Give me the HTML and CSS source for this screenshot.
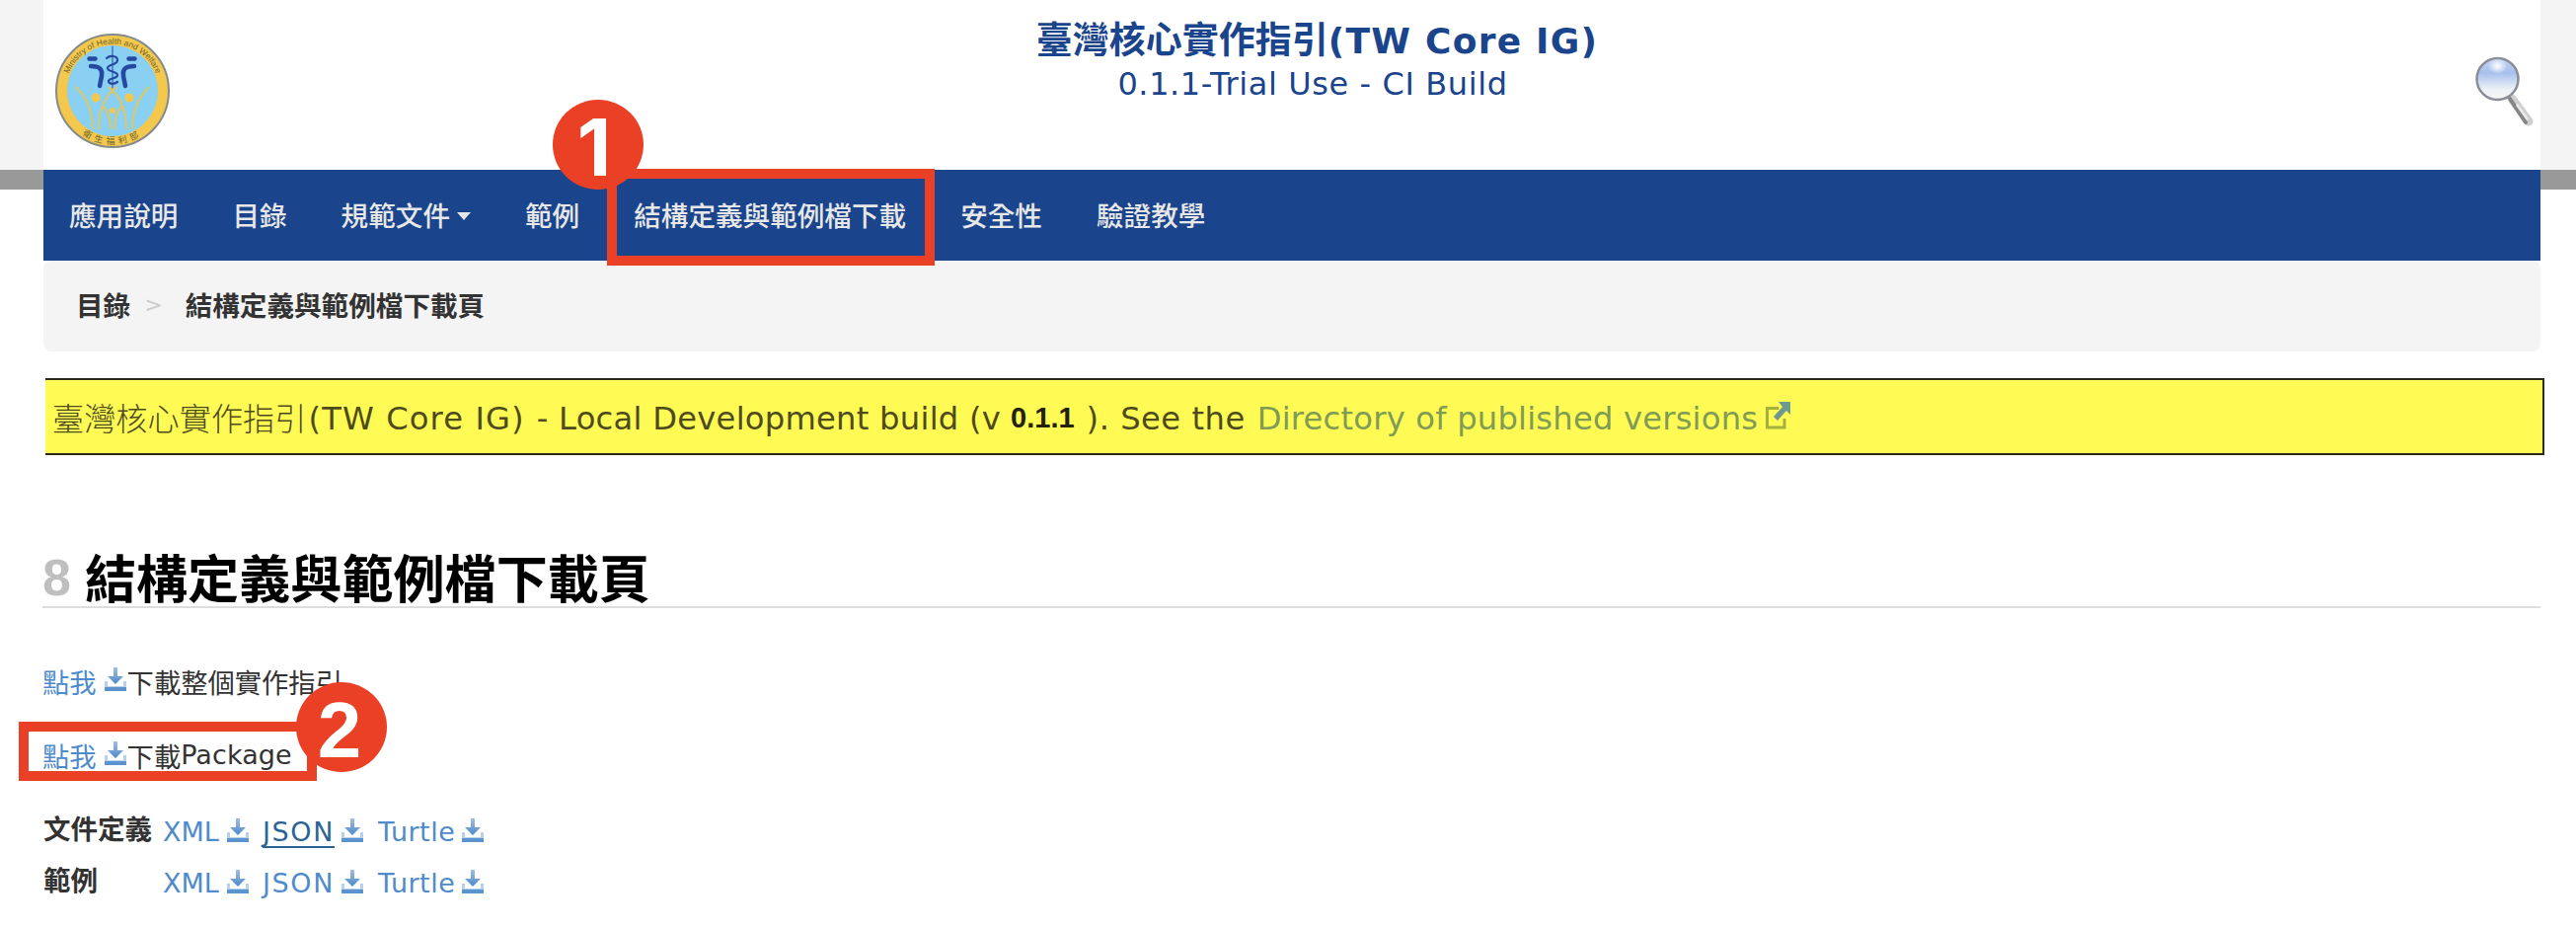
FILE: index.html
```html
<!DOCTYPE html>
<html lang="zh-Hant">
<head>
<meta charset="utf-8">
<title>結構定義與範例檔下載頁</title>
<link rel="stylesheet" href="styles.css">
</head>
<body>
<svg class="defs" width="0" height="0">
  <defs>
    <linearGradient id="dl" x1="0" y1="0" x2="0" y2="1"><stop offset="0" stop-color="#9fbfe2"/><stop offset="1" stop-color="#4d89c8"/></linearGradient>
    <symbol id="download" viewBox="0 0 22 24">
      <path d="M0 14h3v5h16v-5h3V24H0z" fill="#b9d0ea"/>
      <path d="M0 20h22v4H0z" fill="#5b93cf"/>
      <path d="M9 0h4v9h6l-8 8-8-8h6z" fill="url(#dl)"/>
    </symbol>
  </defs>
</svg>
<header class="masthead">
  <div class="masthead-inner">
    <svg class="logo" viewBox="0 0 116 116">
      <defs>
        <path id="arcTop" d="M10.500 58A47.500 47.500 0 0 1 105.500 58"/>
        <path id="arcBottom" d="M4 58A54 54 0 0 0 112 58"/>
      </defs>
      <circle cx="58" cy="58" r="57" fill="#f4c84c" stroke="#858b8c" stroke-width="2"/>
      <circle cx="58" cy="58" r="46" fill="#8ad0f3"/>
      <text class="logo-en"><textPath href="#arcTop" startOffset="50%" text-anchor="middle">Ministry of Health and Welfare</textPath></text>
      <text class="logo-zh"><textPath href="#arcBottom" startOffset="50%" text-anchor="middle">衛生福利部</textPath></text>
      <g fill="none" stroke="#2549a0" stroke-linecap="round">
        <path d="M58 13v42" stroke-width="1"/>
        <path d="M52 25c3-3 11-3 11 2s-10 4-10 8 10 3 10 7-9 3-9 6 5 4 9 1" stroke-width="2.200"/>
        <path d="M36 33c9 0 12 3 11 10l-2 10M80 33c-9 0-12 3-11 10l2 10" stroke-width="4.500"/>
        <path d="M34.500 25.500h6M74.500 25.500h6" stroke-width="4.500"/>
      </g>
      <g fill="none" stroke="#e5c657" stroke-width="1.800">
        <path d="M21 54q17 17 17 43M95 54q-17 17-17 43M62 54Q44 68 44 97M54 54q18 14 18 43M48 73q8 8 8 24M68 73q-8 8-8 24"/>
      </g>
      <g fill="#f4c84c"><circle cx="41" cy="65" r="4.500"/><circle cx="75" cy="65" r="4.500"/><circle cx="58" cy="78" r="3"/></g>
    </svg>
    <div class="titles">
      <div class="title"><span class="title-zh">臺灣核心實作指引</span><span class="title-en">(TW Core IG)</span></div>
      <div class="subtitle">0.1.1-Trial Use - CI Build</div>
    </div>
    <svg class="search" viewBox="0 0 62 72">
      <defs>
        <linearGradient id="lens" x1="0" y1="0" x2="0" y2="1"><stop offset="0" stop-color="#c3d3f3"/><stop offset=".35" stop-color="#a6c0ed"/><stop offset=".75" stop-color="#edf1f6"/><stop offset="1" stop-color="#f6f7f4"/></linearGradient>
        <radialGradient id="glare"><stop offset="0" stop-color="#fff"/><stop offset="1" stop-color="#fff" stop-opacity="0"/></radialGradient>
      </defs>
      <path d="M38 43L55 66" stroke="#cfcfcf" stroke-width="9" stroke-linecap="round"/>
      <path d="M36 43L52 67" stroke="#858585" stroke-width="4" stroke-linecap="round"/>
      <path d="M43 49L54 64" stroke="#ececec" stroke-width="2.500"/>
      <circle cx="23.500" cy="23" r="21" fill="url(#lens)" stroke="#8b8e96" stroke-width="2.500"/>
      <ellipse cx="23.500" cy="10" rx="10" ry="8" fill="url(#glare)"/>
    </svg>
  </div>
</header>
<div class="nav-strip">
  <nav class="nav">
    <a>應用說明</a><a>目錄</a><a>規範文件<i class="caret"></i></a><a>範例</a><a>結構定義與範例檔下載</a><a>安全性</a><a>驗證教學</a>
  </nav>
</div>
<main class="page">
  <div class="crumbs"><span>目錄</span><span class="sep">&gt;</span><span>結構定義與範例檔下載頁</span></div>
  <div class="notice">
    <span class="n-zh">臺灣核心實作指引</span><span class="n-name">(TW Core IG)</span><span class="n-a">- Local Development build (v</span><b class="n-v">0.1.1</b><span class="n-b">). See the</span><a class="n-link">Directory of published versions</a>
    <svg class="external" viewBox="0 0 26 28"><path d="M14 6.500H2.500V26H20v-9" fill="none" stroke="#a3b03c" stroke-width="3"/><path d="M14 0h12v13l-4-4-9 10-4-4 9-10z" fill="#6c9a8c"/></svg>
  </div>
  <h1 class="heading"><span class="num">8</span><span>結構定義與範例檔下載頁</span></h1>
  <p class="line"><a>點我</a><svg class="dl"><use href="#download"/></svg><span>下載整個實作指引</span></p>
  <p class="line"><a>點我</a><svg class="dl"><use href="#download"/></svg><span>下載</span><span class="pkg">Package</span></p>
  <div class="formats">
    <b>文件定義</b><a class="xml">XML</a><svg class="dl"><use href="#download"/></svg><a class="json hover">JSON</a><svg class="dl"><use href="#download"/></svg><a class="turtle">Turtle</a><svg class="dl"><use href="#download"/></svg>
    <b>範例</b><a class="xml">XML</a><svg class="dl"><use href="#download"/></svg><a class="json">JSON</a><svg class="dl"><use href="#download"/></svg><a class="turtle">Turtle</a><svg class="dl"><use href="#download"/></svg>
  </div>
</main>
<div class="frame frame-1"></div>
<div class="frame frame-2"></div>
<div class="badge badge-1"><span>1</span></div>
<div class="badge badge-2"><span>2</span></div>
</body>
</html>
```

FILE: styles.css
```css
* { box-sizing: border-box; }
body {
  margin: 0;
  position: relative;
  height: 942px;
  overflow: hidden;
  background: #fff;
  color: #333;
  font-family: "DejaVu Sans", "Noto Sans CJK TC", sans-serif;
  font-size: 27.5px;
  white-space: nowrap;
}
.defs { position: absolute; }
.masthead { background: #f4f4f4; padding: 0 36px 0 44px; }
.masthead-inner {
  height: 172px;
  background: #fff;
  display: flex;
  justify-content: space-between;
  padding: 0 5px 0 12px;
}
.logo { width: 116px; height: 116px; margin-top: 34px; }
.logo-en { font: 8.500px "Liberation Sans", sans-serif; fill: #6d6332; }
.logo-zh { font: 9px "Noto Sans CJK TC", sans-serif; fill: #6d6332; letter-spacing: 4px; }
.titles { color: #1a448c; text-align: center; margin-right: 10px; padding-top: 13px; }
.title { font-weight: bold; height: 50px; line-height: 50px; font-size: 36px; }
.title-zh { font-family: "Noto Sans CJK TC", sans-serif; font-size: 37px; }
.title-en { letter-spacing: 1.25px; }
.subtitle { font-size: 32px; height: 40px; line-height: 40px; letter-spacing: .6px; margin: 2px 9px 0 0; }
.search { width: 62px; height: 72px; margin-top: 57px; fill: none; }

.nav-strip {
  padding: 0 36px 0 44px;
  background: linear-gradient(#999, #999) no-repeat 0 0 / 100% 20px;
}
.nav {
  height: 92px;
  background: #1a448c;
  color: #e7e7e7;
  display: flex;
  align-items: center;
  padding: 0 0 3px 26px;
  gap: 55px;
  font: 500 27.6px "Noto Sans CJK TC", sans-serif;
}
.nav a { display: flex; align-items: center; color: inherit; }
.caret { margin: 5px 0 0 7px; border: 7.5px solid transparent; border-top: 8px solid #e7e7e7; border-bottom: 0; }

.page { padding: 0 36px 0 44px; }
.crumbs {
  height: 92px;
  background: #f4f4f4;
  border-radius: 8px;
  display: flex;
  align-items: center;
  padding: 0 0 4px 33px;
  font: bold 27.6px "Noto Sans CJK TC", sans-serif;
}
.sep { color: #ccc; font: 22px "DejaVu Sans", sans-serif; margin: 0 23px 0 14px; }
.notice {
  margin: 27px -4px 0 2px;
  height: 78px;
  background: #fffb54;
  border: 2px solid #2b2a18;
  border-left: 0;
  display: flex;
  align-items: center;
  padding: 3px 0 0 7px;
  font-size: 32.2px;
  color: #4d4b1c;
}
.n-zh { font-family: "Noto Sans CJK TC", sans-serif; font-size: 32.2px; font-weight: 300; margin: -4px 2px 0 0; }
.n-name { letter-spacing: 1.1px; }
.n-a { letter-spacing: .25px; margin-left: 12px; }
.n-b { letter-spacing: .5px; }
.n-v { font: bold 29px "Liberation Sans", sans-serif; color: #22210c; margin: 0 12px 0 10px; }
.n-link { color: #7f9c55; margin-left: 12px; letter-spacing: .2px; }
.external { width: 26px; height: 28px; margin: -6px 0 0 7px; }
.heading {
  margin: 93px 0 0 -1px;
  height: 62px;
  border-bottom: 2px solid #ddd;
  display: flex;
  align-items: center;
  color: #000;
  font: bold 52.1px/60px "Noto Sans CJK TC", sans-serif;
}
.num { font-family: "Liberation Sans", sans-serif; font-size: 52px; color: #bfbfbf; margin: 2px 14px 0 0; }
.line { margin: 0 0 0 -1px; height: 75px; display: flex; align-items: center; font-family: "Noto Sans CJK TC", sans-serif; font-size: 27.3px; }
.heading + .line { margin-top: 36px; }
.line a, .formats a { color: #4f8bcb; }
.dl { width: 22px; height: 24px; }
.line .dl { margin: -3px 1px 0 8px; }
.pkg { font-family: "DejaVu Sans", sans-serif; font-size: 27px; letter-spacing: .1px; }
.formats {
  display: grid;
  grid-template-columns: 121px 65px 36px 80px 37px 85px 24px;
  grid-auto-rows: 52px;
  align-items: center;
  margin-top: 12px;
  font-size: 27px;
}
.formats b { font-family: "Noto Sans CJK TC", sans-serif; font-size: 27.5px; margin-top: -4px; }
.formats a { line-height: 32px; margin-top: 5px; }
.formats .dl { margin-top: 1px; }
.formats .json { letter-spacing: 1.6px; justify-self: start; }
.formats .turtle { letter-spacing: .5px; }
.formats .hover { color: #2a6496; border-bottom: 2px solid #2a6496; line-height: 28px; height: 30px; margin-top: 7px; }
.frame { position: absolute; border: 10px solid #ea4025; }
.frame-1 { left: 615px; top: 171px; width: 332px; height: 98px; }
.frame-2 { left: 19px; top: 731px; width: 302px; height: 60px; }
.badge {
  position: absolute;
  width: 92px;
  height: 91px;
  border-radius: 50%;
  background: #ea4025;
  color: #fff;
  display: flex;
  align-items: center;
  justify-content: center;
  font: bold 80px/91px "Liberation Sans", sans-serif;
}
.badge-1 { left: 560px; top: 101px; font-family: Inter, "Liberation Sans", sans-serif; padding: 4px 8px 0 0; }
.badge-2 { left: 300px; top: 691px; padding: 5px 4px 0 0; }
```
